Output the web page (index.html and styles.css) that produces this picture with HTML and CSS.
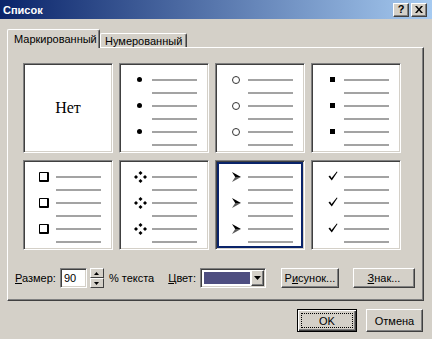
FILE: index.html
```html
<!DOCTYPE html>
<html lang="ru">
<head>
<meta charset="utf-8">
<title>Список</title>
<link rel="stylesheet" href="styles.css">
</head>
<body>
<div class="window">
  <div class="titlebar">
    <span class="title">Список</span>
    <div class="tbtns">
      <span class="tbtn q">?</span>
      <span class="tbtn">
        <svg width="8" height="7" viewBox="0 0 8 7"><path d="M0 0h2l2 2.5 2-2.5h2l-3 3.5 3 3.5h-2l-2-2.5-2 2.5h-2l3-3.5z" fill="#000"/></svg>
      </span>
    </div>
  </div>
  <div class="body">
    <div class="tabs">
      <div class="tab active">Маркированный</div>
      <div class="tab">Нумерованный</div>
    </div>
    <div class="panel">
      <div class="grid">
        <div class="cell none">Нет</div>

        <div class="cell">
          <div class="row"><span class="bul"><i class="dot"></i></span><b class="ln"></b></div>
          <div class="row"><span class="bul"></span><b class="ln"></b></div>
          <div class="row"><span class="bul"><i class="dot"></i></span><b class="ln"></b></div>
          <div class="row"><span class="bul"></span><b class="ln"></b></div>
          <div class="row"><span class="bul"><i class="dot"></i></span><b class="ln"></b></div>
          <div class="row"><span class="bul"></span><b class="ln"></b></div>
        </div>

        <div class="cell">
          <div class="row"><span class="bul"><i class="ring"></i></span><b class="ln"></b></div>
          <div class="row"><span class="bul"></span><b class="ln"></b></div>
          <div class="row"><span class="bul"><i class="ring"></i></span><b class="ln"></b></div>
          <div class="row"><span class="bul"></span><b class="ln"></b></div>
          <div class="row"><span class="bul"><i class="ring"></i></span><b class="ln"></b></div>
          <div class="row"><span class="bul"></span><b class="ln"></b></div>
        </div>

        <div class="cell">
          <div class="row"><span class="bul"><i class="sq"></i></span><b class="ln"></b></div>
          <div class="row"><span class="bul"></span><b class="ln"></b></div>
          <div class="row"><span class="bul"><i class="sq"></i></span><b class="ln"></b></div>
          <div class="row"><span class="bul"></span><b class="ln"></b></div>
          <div class="row"><span class="bul"><i class="sq"></i></span><b class="ln"></b></div>
          <div class="row"><span class="bul"></span><b class="ln"></b></div>
        </div>

        <div class="cell">
          <div class="row"><span class="bul"><i class="box"></i></span><b class="ln"></b></div>
          <div class="row"><span class="bul"></span><b class="ln"></b></div>
          <div class="row"><span class="bul"><i class="box"></i></span><b class="ln"></b></div>
          <div class="row"><span class="bul"></span><b class="ln"></b></div>
          <div class="row"><span class="bul"><i class="box"></i></span><b class="ln"></b></div>
          <div class="row"><span class="bul"></span><b class="ln"></b></div>
        </div>

        <div class="cell">
          <div class="row"><span class="bul"><svg width="13" height="12" viewBox="0 0 13 12"><path d="M6.5 0l2 2-2 2-2-2zM2 4l2 2-2 2-2-2zM11 4l2 2-2 2-2-2zM6.5 8l2 2-2 2-2-2z" fill="#000"/></svg></span><b class="ln"></b></div>
          <div class="row"><span class="bul"></span><b class="ln"></b></div>
          <div class="row"><span class="bul"><svg width="13" height="12" viewBox="0 0 13 12"><path d="M6.5 0l2 2-2 2-2-2zM2 4l2 2-2 2-2-2zM11 4l2 2-2 2-2-2zM6.5 8l2 2-2 2-2-2z" fill="#000"/></svg></span><b class="ln"></b></div>
          <div class="row"><span class="bul"></span><b class="ln"></b></div>
          <div class="row"><span class="bul"><svg width="13" height="12" viewBox="0 0 13 12"><path d="M6.5 0l2 2-2 2-2-2zM2 4l2 2-2 2-2-2zM11 4l2 2-2 2-2-2zM6.5 8l2 2-2 2-2-2z" fill="#000"/></svg></span><b class="ln"></b></div>
          <div class="row"><span class="bul"></span><b class="ln"></b></div>
        </div>

        <div class="cell selected">
          <div class="row"><span class="bul"><svg width="9" height="10" viewBox="0 0 9 10"><path d="M0 0L9 5H3.2z" fill="#000"/><path d="M0 10L9 5H3.2z" fill="#5a5a5a"/></svg></span><b class="ln"></b></div>
          <div class="row"><span class="bul"></span><b class="ln"></b></div>
          <div class="row"><span class="bul"><svg width="9" height="10" viewBox="0 0 9 10"><path d="M0 0L9 5H3.2z" fill="#000"/><path d="M0 10L9 5H3.2z" fill="#5a5a5a"/></svg></span><b class="ln"></b></div>
          <div class="row"><span class="bul"></span><b class="ln"></b></div>
          <div class="row"><span class="bul"><svg width="9" height="10" viewBox="0 0 9 10"><path d="M0 0L9 5H3.2z" fill="#000"/><path d="M0 10L9 5H3.2z" fill="#5a5a5a"/></svg></span><b class="ln"></b></div>
          <div class="row"><span class="bul"></span><b class="ln"></b></div>
        </div>

        <div class="cell">
          <div class="row"><span class="bul"><svg class="chk" width="10" height="10" viewBox="0 0 10 10"><path d="M0.5 5.5L2 4.5 3.6 7 8.8 0.5 9.5 1 3.8 9.5z" fill="#000"/></svg></span><b class="ln"></b></div>
          <div class="row"><span class="bul"></span><b class="ln"></b></div>
          <div class="row"><span class="bul"><svg class="chk" width="10" height="10" viewBox="0 0 10 10"><path d="M0.5 5.5L2 4.5 3.6 7 8.8 0.5 9.5 1 3.8 9.5z" fill="#000"/></svg></span><b class="ln"></b></div>
          <div class="row"><span class="bul"></span><b class="ln"></b></div>
          <div class="row"><span class="bul"><svg class="chk" width="10" height="10" viewBox="0 0 10 10"><path d="M0.5 5.5L2 4.5 3.6 7 8.8 0.5 9.5 1 3.8 9.5z" fill="#000"/></svg></span><b class="ln"></b></div>
          <div class="row"><span class="bul"></span><b class="ln"></b></div>
        </div>
      </div>

      <div class="controls">
        <span class="lbl"><u>Р</u>азмер:</span>
        <span class="field">90</span>
        <span class="spin">
          <span class="spbtn"><svg width="5" height="3" viewBox="0 0 5 3"><path d="M2.5 0L5 3H0z" fill="#000"/></svg></span>
          <span class="spbtn"><svg width="5" height="3" viewBox="0 0 5 3"><path d="M0 0H5L2.5 3z" fill="#000"/></svg></span>
        </span>
        <span class="lbl pct">% текста</span>
        <span class="lbl color-lbl"><u>Ц</u>вет:</span>
        <span class="combo">
          <span class="swatch"></span>
          <span class="drop"><svg width="7" height="4" viewBox="0 0 7 4"><path d="M0 0H7L3.5 4z" fill="#000"/></svg></span>
        </span>
        <span class="btn pic">Р<u>и</u>сунок...</span>
        <span class="btn sign"><u>З</u>нак...</span>
      </div>
    </div>

    <div class="footer">
      <span class="btn big default"><span class="focus">OK</span></span>
      <span class="btn big cancel">Отмена</span>
    </div>
  </div>
</div>
</body>
</html>
```

FILE: styles.css
```css
* { box-sizing: border-box; }

html, body {
  margin: 0;
  padding: 0;
}

body {
  width: 432px;
  height: 339px;
  overflow: hidden;
  background: #d4d0c8;
  font: 11px "Liberation Sans", Arial, sans-serif;
  color: #000;
}

.window {
  width: 432px;
  height: 339px;
}

/* title bar */
.titlebar {
  height: 19px;
  background: linear-gradient(to right, #0a246a, #a6caf0);
  display: flex;
  align-items: center;
  justify-content: space-between;
  padding: 0 5px 0 3px;
}

.title {
  color: #fff;
  font-weight: bold;
  font-size: 11px;
}

.tbtns {
  display: flex;
  gap: 2px;
}

.tbtn {
  width: 16px;
  height: 14px;
  background: #d4d0c8;
  border-top: 1px solid #fff;
  border-left: 1px solid #fff;
  border-right: 1px solid #404040;
  border-bottom: 1px solid #404040;
  box-shadow: inset -1px -1px 0 #808080;
  display: flex;
  align-items: center;
  justify-content: center;
  font-weight: bold;
  font-size: 11px;
  line-height: 1;
}

/* body */
.body {
  padding: 10px 8px 0 7px;
}

.tabs {
  display: flex;
  align-items: flex-end;
  height: 18px;
  position: relative;
  z-index: 2;
}

.tab {
  height: 14px;
  padding: 1px 4px 0 4px;
  border-top: 1px solid #fff;
  border-left: 1px solid #fff;
  border-right: 1px solid #404040;
  box-shadow: inset -1px 0 0 #808080;
  border-radius: 2px 2px 0 0;
  background: #d4d0c8;
  white-space: nowrap;
}

.tab.active {
  width: 93px;
  height: 19px;
  margin-bottom: -1px;
  padding: 3px 0 0 6px;
}

/* tab panel */
.panel {
  height: 254px;
  border-top: 1px solid #fff;
  border-left: 1px solid #fff;
  border-right: 1px solid #404040;
  border-bottom: 1px solid #404040;
  box-shadow: inset -1px -1px 0 #808080;
}

.grid {
  display: grid;
  grid-template-columns: repeat(4, 90px);
  grid-auto-rows: 90px;
  column-gap: 6px;
  row-gap: 7px;
  padding: 15px 0 0 15px;
}

.cell {
  background: #fff;
  border-top: 1px solid #808080;
  border-left: 1px solid #808080;
  border-right: 1px solid #fff;
  border-bottom: 1px solid #fff;
  box-shadow: inset 1px 1px 0 #404040, inset -1px -1px 0 #d4d0c8;
  padding: 9px 0 0 13px;
  display: flex;
  flex-direction: column;
}

.cell.none {
  padding: 0;
  align-items: center;
  justify-content: center;
  font: 16px "Liberation Serif", "Times New Roman", serif;
}

.cell.selected {
  outline: 2px solid #0a246a;
  outline-offset: -4px;
}

.row {
  height: 13px;
  display: flex;
  align-items: center;
}

.bul {
  width: 14px;
  margin-right: 5px;
  height: 13px;
  display: flex;
  align-items: center;
  justify-content: center;
}

.ln {
  width: 45px;
  height: 2px;
  background: #a3a3a3;
}

.dot {
  width: 5px;
  height: 5px;
  border-radius: 50%;
  background: #000;
  margin-right: 1px;
}

.ring {
  width: 8px;
  height: 8px;
  border-radius: 50%;
  border: 1px solid #333;
}

.sq {
  width: 5px;
  height: 5px;
  background: #000;
}

.box {
  width: 10px;
  height: 10px;
  border: 1px solid #000;
  border-right-width: 2px;
  border-bottom-width: 2px;
  border-radius: 1px;
}

.chk {
  margin-left: 2px;
  margin-top: -2px;
}

/* controls */
.controls {
  display: flex;
  align-items: center;
  height: 20px;
  margin-top: 18px;
  padding-left: 7px;
}

.lbl {
  white-space: nowrap;
}

.field {
  width: 27px;
  height: 20px;
  margin-left: 4px;
  background: #fff;
  border-top: 1px solid #808080;
  border-left: 1px solid #808080;
  border-right: 1px solid #fff;
  border-bottom: 1px solid #fff;
  box-shadow: inset 1px 1px 0 #404040, inset -1px -1px 0 #d4d0c8;
  padding: 3px 0 0 3px;
}

.spin {
  margin-left: 3px;
  width: 14px;
  height: 20px;
  display: flex;
  flex-direction: column;
}

.spbtn {
  flex: 1;
  background: #d4d0c8;
  border-top: 1px solid #fff;
  border-left: 1px solid #fff;
  border-right: 1px solid #404040;
  border-bottom: 1px solid #404040;
  display: flex;
  align-items: center;
  justify-content: center;
}

.pct {
  margin-left: 5px;
}

.color-lbl {
  margin-left: 14px;
}

.combo {
  margin-left: 4px;
  width: 66px;
  height: 20px;
  display: flex;
  border-top: 1px solid #808080;
  border-left: 1px solid #808080;
  border-right: 1px solid #fff;
  border-bottom: 1px solid #fff;
  box-shadow: inset 1px 1px 0 #404040, inset -1px -1px 0 #d4d0c8;
  padding: 2px;
  background: #fff;
}

.swatch {
  flex: 1;
  background: #4e4e80;
  margin: 1px 1px 1px 1px;
}

.drop {
  width: 13px;
  background: #d4d0c8;
  border-top: 1px solid #fff;
  border-left: 1px solid #fff;
  border-right: 1px solid #404040;
  border-bottom: 1px solid #404040;
  box-shadow: inset -1px -1px 0 #808080;
  display: flex;
  align-items: center;
  justify-content: center;
  margin: -1px -1px -1px 0;
}

.btn {
  height: 20px;
  display: flex;
  align-items: center;
  justify-content: center;
  background: #d4d0c8;
  border-top: 1px solid #fff;
  border-left: 1px solid #fff;
  border-right: 1px solid #404040;
  border-bottom: 1px solid #404040;
  box-shadow: inset -1px -1px 0 #808080;
  white-space: nowrap;
}

.pic {
  width: 58px;
  margin-left: 15px;
}

.sign {
  width: 62px;
  margin-left: 14px;
}

/* footer */
.footer {
  display: flex;
  justify-content: flex-end;
  gap: 9px;
  margin-top: 8px;
  padding-right: 1px;
}

.btn.big {
  height: 23px;
}

.btn.default {
  width: 60px;
  border: 1px solid #000;
  box-shadow: inset 1px 1px 0 #fff, inset -1px -1px 0 #404040, inset -2px -2px 0 #808080;
  padding: 3px;
}

.focus {
  flex: 1;
  align-self: stretch;
  border: 1px dotted #000;
  display: flex;
  align-items: center;
  justify-content: center;
}

.cancel {
  width: 57px;
}
```
